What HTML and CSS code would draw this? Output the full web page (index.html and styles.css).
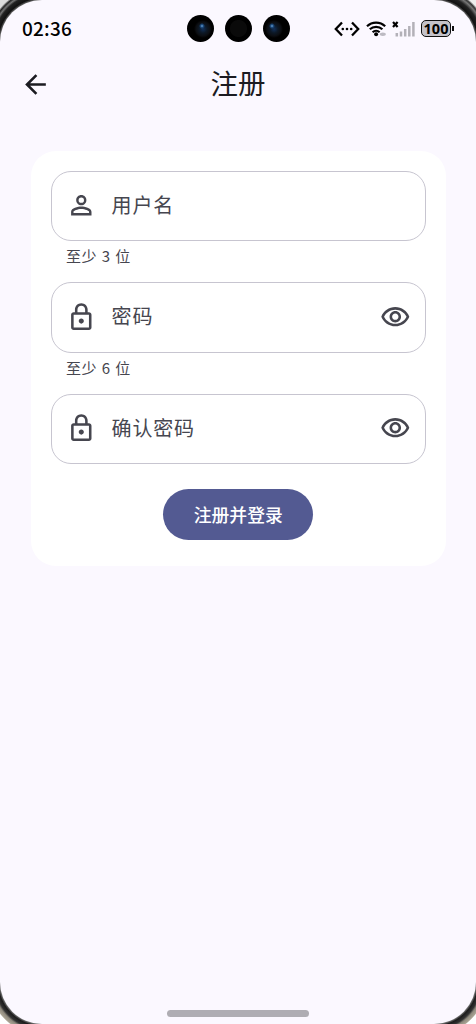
FILE: index.html
```html
<!DOCTYPE html>
<html lang="zh-CN">
<head>
    <meta charset="UTF-8">
    <meta name="viewport" content="width=device-width, initial-scale=1.0">
    <title>注册</title>
    <link rel="stylesheet" href="styles.css">
</head>
<body>
    <div class="screen">
        <!-- Status bar -->
        <div class="status-bar">
            <span class="time">02:36</span>
            <div class="cameras">
                <span class="camera lens"></span>
                <span class="camera"></span>
                <span class="camera lens"></span>
            </div>
            <div class="status-icons">
                <svg class="dev-icon" width="26" height="16" viewBox="0 0 26 16">
                    <path d="M8 1.500L1.800 8l6.200 6.500M18 1.500L24.200 8l-6.200 6.500" fill="none" stroke="#000" stroke-width="2.300"/>
                    <circle cx="8.800" cy="8" r="1.300"/>
                    <circle cx="13" cy="8" r="1.300"/>
                    <circle cx="17.200" cy="8" r="1.300"/>
                </svg>
                <svg class="wifi-icon" width="21" height="17" viewBox="0 0 21 17">
                    <g fill="none" stroke="#000" stroke-width="2.200">
                        <path d="M1 6.300a13.100 13.100 0 0 1 18.200 0"/>
                        <path d="M3.800 9.300a9.200 9.200 0 0 1 12.600 0"/>
                        <path d="M6.600 12.200a5.200 5.200 0 0 1 7 0"/>
                    </g>
                    <circle cx="10.100" cy="14.200" r="2"/>
                    <ellipse cx="16.800" cy="14.200" rx="3" ry="1.700" fill="#bcbac2"/>
                </svg>
                <svg class="signal-icon" width="23" height="16" viewBox="0 0 23 16">
                    <path d="M1 1l4.600 5M5.600 1L1 6" stroke="#000" stroke-width="2.200"/>
                    <path d="M4.800 15.500V12M9 15.500v-5M13.200 15.500V8M17.300 15.500V5M21.400 15.500V1" stroke="#b3b1b8" stroke-width="2.500"/>
                </svg>
                <div class="battery">100</div>
            </div>
        </div>

        <!-- App bar -->
        <header class="app-bar">
            <svg class="back" viewBox="0 0 24 24">
                <path d="M20 11H7.830l5.590-5.590L12 4l-8 8 8 8 1.410-1.410L7.830 13H20v-2z"/>
            </svg>
            <h1>注册</h1>
        </header>

        <!-- Register form -->
        <form class="card">
            <div class="field">
                <svg class="icon" viewBox="0 0 24 24">
                    <path d="M12 5.900a2.100 2.100 0 1 1 0 4.200 2.100 2.100 0 0 1 0-4.200m0 9c2.970 0 6.100 1.460 6.100 2.100v1.100H5.900V17c0-.64 3.130-2.100 6.100-2.100M12 4C9.790 4 8 5.790 8 8s1.790 4 4 4 4-1.790 4-4-1.790-4-4-4zm0 9c-2.670 0-8 1.340-8 4v3h16v-3c0-2.660-5.330-4-8-4z"/>
                </svg>
                <span class="label">用户名</span>
            </div>
            <p class="helper">至少 3 位</p>

            <div class="field">
                <svg class="icon" viewBox="0 0 24 24">
                    <path d="M18 8h-1V6c0-2.760-2.240-5-5-5S7 3.240 7 6v2H6c-1.100 0-2 .9-2 2v10c0 1.100.9 2 2 2h12c1.100 0 2-.9 2-2V10c0-1.100-.9-2-2-2zM9 6c0-1.660 1.340-3 3-3s3 1.340 3 3v2H9V6zm9 14H6V10h12v10zm-6-3c1.100 0 2-.9 2-2s-.9-2-2-2-2 .9-2 2 .9 2 2 2z"/>
                </svg>
                <span class="label">密码</span>
                <svg class="icon eye" viewBox="0 0 24 24">
                    <path d="M12 6c3.790 0 7.170 2.130 8.820 5.500C19.170 14.870 15.790 17 12 17s-7.170-2.130-8.820-5.500C4.830 8.130 8.210 6 12 6m0-2C7 4 2.730 7.110 1 11.500 2.730 15.890 7 19 12 19s9.270-3.110 11-7.500C21.270 7.110 17 4 12 4zm0 5c1.380 0 2.500 1.120 2.500 2.500S13.380 14 12 14s-2.500-1.120-2.500-2.500S10.620 9 12 9m0-2c-2.480 0-4.500 2.020-4.500 4.500S9.520 16 12 16s4.500-2.020 4.500-4.500S14.480 7 12 7z"/>
                </svg>
            </div>
            <p class="helper">至少 6 位</p>

            <div class="field">
                <svg class="icon" viewBox="0 0 24 24">
                    <path d="M18 8h-1V6c0-2.760-2.240-5-5-5S7 3.240 7 6v2H6c-1.100 0-2 .9-2 2v10c0 1.100.9 2 2 2h12c1.100 0 2-.9 2-2V10c0-1.100-.9-2-2-2zM9 6c0-1.660 1.340-3 3-3s3 1.340 3 3v2H9V6zm9 14H6V10h12v10zm-6-3c1.100 0 2-.9 2-2s-.9-2-2-2-2 .9-2 2 .9 2 2 2z"/>
                </svg>
                <span class="label">确认密码</span>
                <svg class="icon eye" viewBox="0 0 24 24">
                    <path d="M12 6c3.790 0 7.170 2.130 8.820 5.500C19.170 14.870 15.790 17 12 17s-7.170-2.130-8.820-5.500C4.830 8.130 8.210 6 12 6m0-2C7 4 2.730 7.110 1 11.500 2.730 15.890 7 19 12 19s9.270-3.110 11-7.500C21.270 7.110 17 4 12 4zm0 5c1.380 0 2.500 1.120 2.500 2.500S13.380 14 12 14s-2.500-1.120-2.500-2.500S10.620 9 12 9m0-2c-2.480 0-4.500 2.020-4.500 4.500S9.520 16 12 16s4.500-2.020 4.500-4.500S14.480 7 12 7z"/>
                </svg>
            </div>

            <button type="button" class="submit">注册并登录</button>
        </form>

        <div class="home-bar"></div>
    </div>
</body>
</html>
```

FILE: styles.css
```css
* {
    box-sizing: border-box;
}

/* phone frame, visible behind the rounded screen corners */
body {
    margin: 0;
    height: 1024px;
    overflow: hidden;
    font-family: "Noto Sans CJK SC", sans-serif;
    color: #1b1b21;
    background:
        radial-gradient(circle at 42px 42px, #999 40px, #666 42px, #111 44px, #222 48px, #777 50px, #222 52px, #ddd 54px) 0 0 / 42px 42px no-repeat,
        radial-gradient(circle at 0 42px, #999 40px, #666 42px, #111 44px, #222 48px, #777 51px, #333 53px, #eee 55px) 100% 0 / 42px 42px no-repeat,
        radial-gradient(circle at 42px 0, #aaa 40px, #777 42px, #1c1c1c 44px, #333 47px, #8f8a7e 49px, #aaa494 52px, #fff 53px) 0 100% / 42px 42px no-repeat,
        radial-gradient(circle at 0 0, #aaa 40px, #777 42px, #1c1c1c 44px, #333 47px, #8f8a7e 49px, #aaa494 52px, #fff 53px) 100% 100% / 42px 42px no-repeat;
}

.screen {
    display: flex;
    flex-direction: column;
    height: 1024px;
    background-color: #fbf8ff;
    border-radius: 42px;
}

.status-bar {
    display: grid;
    grid-template-columns: 1fr auto 1fr;
    align-items: center;
    height: 57px;
    padding: 0 22px;
}

.time {
    padding-bottom: 2px;
    font-size: 19px;
    font-weight: 500;
    letter-spacing: 0.200px;
    line-height: 28px;
    color: #000;
}

.cameras {
    display: flex;
    gap: 11px;
}

.camera {
    width: 27px;
    height: 27px;
    border-radius: 50%;
    background: radial-gradient(circle, #0a0a0a 8px, #000 9px);
}

.camera.lens {
    background:
        radial-gradient(circle at 15px 11px, #6fa6d8 0, #1c4a7d 1.500px, transparent 3px),
        radial-gradient(circle at 16px 14px, #12305a 0, #0c1826 4px, #0c0e12 7px, #000 9px);
}

.camera.lens:last-child {
    background:
        radial-gradient(circle at 9px 11px, #6fa6d8 0, #1c4a7d 1.500px, transparent 3px),
        radial-gradient(circle at 11px 14px, #12305a 0, #0c1826 4px, #0c0e12 7px, #000 9px);
}

.status-icons {
    display: flex;
    align-items: center;
    justify-content: flex-end;
    margin-right: 3px;
}

.dev-icon {
    margin-right: 6px;
}

.wifi-icon {
    margin-right: 5px;
}

.signal-icon {
    margin-right: 6px;
}

.battery {
    position: relative;
    width: 30px;
    height: 17px;
    border: 1.500px solid #111;
    border-radius: 5px;
    background-color: #c4c2c9;
    font-family: "Open Sans", sans-serif;
    font-size: 14.500px;
    font-weight: 700;
    line-height: 15px;
    text-align: center;
    color: #000;
}

.battery::after {
    content: "";
    position: absolute;
    right: -4px;
    top: 5px;
    width: 2px;
    height: 5px;
    background-color: #111;
}

.app-bar {
    display: grid;
    grid-template-columns: 31px 1fr 31px;
    align-items: center;
    height: 54px;
    padding: 0 20px;
}

.back {
    width: 31px;
    height: 31px;
    fill: #1b1b21;
}

h1 {
    margin: 0;
    padding-bottom: 4px;
    font-size: 27.500px;
    font-weight: 400;
    line-height: 40px;
    text-align: center;
}

.card {
    display: flex;
    flex-direction: column;
    height: 415px;
    margin: 39.500px 30px 0 30.500px;
    padding: 20px;
    background-color: #fff;
    border-radius: 25px;
}

.field {
    display: flex;
    align-items: center;
    flex: none;
    height: 70.500px;
    margin-right: 0.500px;
    padding: 0 14px;
    border: 1.300px solid #c7c5d0;
    border-radius: 20px;
    color: #46464f;
}

.icon {
    width: 30.600px;
    height: 30.600px;
    fill: #46464f;
}

.label {
    flex: 1;
    margin-left: 15.500px;
    padding-bottom: 2px;
    font-size: 20px;
    letter-spacing: 0.800px;
    line-height: 30px;
}

.helper {
    margin: 4px 0 0 15.500px;
    height: 37px;
    font-size: 15px;
    letter-spacing: 0.500px;
    line-height: 21px;
    word-spacing: 0.900px;
    color: #46464f;
}

.submit {
    align-self: center;
    width: 150px;
    height: 51px;
    margin-top: 25px;
    padding: 0 0 2px;
    border: none;
    border-radius: 26px;
    background-color: #535a92;
    color: #fff;
    font-family: inherit;
    font-size: 17.800px;
    font-weight: 500;
}

.home-bar {
    width: 142px;
    height: 7px;
    margin: auto auto 7px;
    border-radius: 4px;
    background-color: #afadb3;
}
```
